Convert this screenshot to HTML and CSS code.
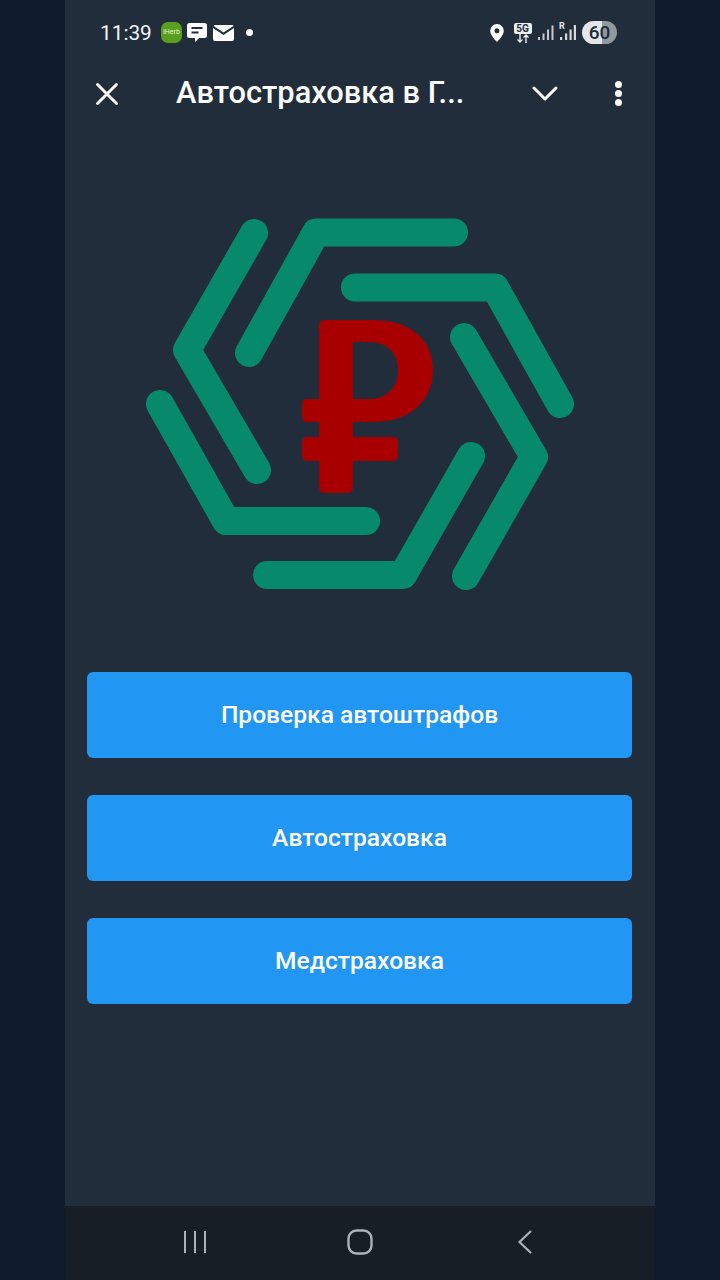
FILE: index.html
```html
<!DOCTYPE html>
<html lang="ru">
<head>
    <meta charset="UTF-8">
    <meta name="viewport" content="width=device-width, initial-scale=1.0">
    <title>Автостраховка</title>
    <link rel="stylesheet" href="styles.css">
</head>
<body>

    <div class="phone">
        <div class="status-bar">
            <div class="status-left">
                <span class="clock">11:39</span>
                <span class="iherb">iHerb</span>
                <svg class="icon-msg" width="20" height="19" viewBox="0 0 20 19">
                    <path d="M2.500 0h15A2.500 2.500 0 0 1 20 2.500v10a2.500 2.500 0 0 1-2.500 2.500H12l-3.500 4-.8-4H2.500A2.500 2.500 0 0 1 0 12.500v-10A2.500 2.500 0 0 1 2.500 0z" fill="#fff"/>
                    <path d="M4.500 5h11M4.500 9.500h7" stroke="#212d3b" stroke-width="2"/>
                </svg>
                <svg class="icon-mail" width="21" height="16" viewBox="0 0 21 16">
                    <path d="M2 0h17q1 0 1.500 1l-10 6.500L.5 1Q1 0 2 0z" fill="#fff"/>
                    <path d="M0 3l10.500 7L21 3v11a2 2 0 0 1-2 2H2a2 2 0 0 1-2-2z" fill="#fff"/>
                </svg>
                <span class="dot"></span>
            </div>
            <div class="status-right">
                <svg class="icon-pin" width="14" height="18" viewBox="0 0 14 18">
                    <path fill-rule="evenodd" d="M7 0a6.800 6.800 0 0 1 6.800 6.800C13.800 11 9 16 7 18 5 16 .2 11 .2 6.800A6.800 6.800 0 0 1 7 0zm0 4.300a2.500 2.500 0 1 0 0 5 2.500 2.500 0 0 0 0-5z" fill="#fff"/>
                </svg>
                <div class="net">
                    <span class="net-label">5G</span>
                    <svg width="14" height="9" viewBox="0 0 14 9">
                        <path d="M4 0v8M1.500 5.500L4 8l2.500-2.500M10 9V1M7.500 3.500L10 1l2.500 2.500" stroke="#fff" stroke-width="1.300" fill="none"/>
                    </svg>
                </div>
                <svg class="icon-signal" width="16" height="17" viewBox="0 0 16 17">
                    <path d="M0 13h2v3H0zM4.500 9.500h2V16h-2zM9 5.500h2V16H9zM13.500 1.500h2V16h-2z" fill="#c4c9cf"/>
                </svg>
                <div class="signal-r">
                    <span class="roam">R</span>
                    <svg width="17" height="17" viewBox="0 0 17 17">
                        <path d="M1 13h2.200v3H1zM6 9.500h2.200V16H6zM10.500 5.500h2.200V16h-2.200zM14.800 1h2.200v15h-2.200z" fill="#d5d8dc"/>
                    </svg>
                </div>
                <span class="battery">60</span>
            </div>
        </div>

        <div class="toolbar">
            <svg class="tb-close" width="24" height="24" viewBox="0 0 24 24">
                <path d="M2.500 2.500l19 19M21.500 2.500l-19 19" stroke="#fff" stroke-width="3" stroke-linecap="round"/>
            </svg>
            <h1 class="tb-title">Автостраховка в Г...</h1>
            <svg class="tb-chevron" width="26" height="17" viewBox="0 0 26 17">
                <path d="M2 3l11 11 11-11" stroke="#fff" stroke-width="3" fill="none" stroke-linecap="round" stroke-linejoin="round"/>
            </svg>
            <div class="tb-more">
                <span></span>
                <span></span>
                <span></span>
            </div>
        </div>

        <div class="content">
            <!-- viewBox is in page coordinates so the logo points are easy to read -->
            <svg class="logo" width="590" height="400" viewBox="65 200 590 400">
                <g fill="none" stroke="#078a6c" stroke-width="28" stroke-linecap="round" stroke-linejoin="round">
                    <path d="M254 233L187 350L257 470"/>
                    <path d="M249 353L316 232.500H454"/>
                    <path d="M355 287.500H495L560 404"/>
                    <path d="M464 337L534 457L466 576"/>
                    <path d="M471 456L403 575H267"/>
                    <path d="M160 404L226 521H366"/>
                </g>
                <path fill="#a80000" fill-rule="evenodd" d="M325 320H372C411 320 433 340 433 370C433 402 409 422 372 422H353V437H393Q398 437 398 442V456Q398 461 393 461H353V487Q353 493 347 493H325Q319 493 319 487V461H307Q302 461 302 456V442Q302 437 307 437H319V422H307Q302 422 302 417V404Q302 399 307 399H319V326Q319 320 325 320ZM353 342V399H369C387 399 398 387 398 370C398 353 387 342 369 342Z"/>
            </svg>

            <div class="buttons">
                <button class="action-btn">Проверка автоштрафов</button>
                <button class="action-btn">Автостраховка</button>
                <button class="action-btn">Медстраховка</button>
            </div>
        </div>

        <div class="nav-bar">
            <svg width="24" height="24" viewBox="0 0 24 24">
                <path d="M2 1v22M12 1v22M22 1v22" stroke="#aab2ba" stroke-width="2"/>
            </svg>
            <svg class="nav-home" width="26" height="26" viewBox="0 0 26 26">
                <rect x="1.500" y="1.500" width="23" height="23" rx="8" fill="none" stroke="#aab2ba" stroke-width="2.400"/>
            </svg>
            <svg width="18" height="26" viewBox="0 0 18 26">
                <path d="M15 2L3.500 13L15 24" stroke="#aab2ba" stroke-width="2.200" fill="none"/>
            </svg>
        </div>
    </div>

</body>
</html>
```

FILE: styles.css
```css
* {
    box-sizing: border-box;
}

html, body {
    height: 100%;
}

body {
    margin: 0;
    padding: 0;
    background-color: #0e1c2b;
    font-family: Roboto, "Noto Sans", sans-serif;
    color: #fff;
    overflow: hidden;
}

.phone {
    width: 590px;
    height: 1280px;
    margin: 0 auto;
    background-color: #212d3b;
    display: flex;
    flex-direction: column;
}

/* status bar */
.status-bar {
    height: 64px;
    padding: 21px 38px 0 35px;
    display: flex;
    justify-content: space-between;
    align-items: flex-start;
}

.status-left,
.status-right {
    display: flex;
    align-items: center;
    height: 23px;
}

.clock {
    font-size: 20.800px;
    width: 61px;
    color: #f4f5f6;
}

.iherb {
    width: 21px;
    height: 21px;
    border-radius: 7px;
    background-color: #5a9e1e;
    font-size: 7px;
    line-height: 21px;
    text-align: center;
    color: #e8f3dc;
}

.icon-msg {
    margin-left: 5px;
}

.icon-mail {
    margin-left: 6px;
}

.dot {
    width: 7px;
    height: 7px;
    border-radius: 50%;
    background-color: #fff;
    margin-left: 12px;
}

.icon-pin {
    margin-right: 9px;
}

.net {
    width: 19px;
    margin-right: 6px;
    display: flex;
    flex-direction: column;
    align-items: center;
}

.net-label {
    width: 18px;
    height: 11px;
    border-radius: 2px;
    background-color: #eef0f2;
    color: #212d3b;
    font-size: 10px;
    font-weight: 700;
    line-height: 11px;
    text-align: center;
}

.icon-signal {
    margin-right: 5px;
}

.signal-r {
    position: relative;
    margin-right: 6px;
    display: flex;
}

.roam {
    position: absolute;
    left: 0;
    top: -3px;
    font-size: 9px;
    font-weight: 700;
    color: #e4e6e9;
}

.battery {
    width: 35px;
    height: 23px;
    border-radius: 12px;
    background: linear-gradient(90deg, #e3e6ea 0, #e3e6ea 56%, #92989f 56%, #92989f 100%);
    color: #212d3b;
    font-size: 19px;
    font-weight: 500;
    line-height: 23px;
    text-align: center;
}

/* toolbar */
.toolbar {
    height: 60px;
    display: flex;
    align-items: center;
    padding: 0 0 1px 30px;
}

.tb-close {
    flex-shrink: 0;
}

.tb-title {
    margin: 0 0 3px 57px;
    width: 356px;
    font-size: 30.800px;
    font-weight: 500;
    white-space: nowrap;
}

.tb-chevron {
    flex-shrink: 0;
}

.tb-more {
    margin-left: 57px;
    display: flex;
    flex-direction: column;
    gap: 2px;
}

.tb-more span {
    width: 7px;
    height: 7px;
    border-radius: 50%;
    background-color: #fff;
}

/* main area */
.content {
    flex: 1;
    padding-top: 76px;
}

.logo {
    display: block;
}

.buttons {
    margin-top: 72px;
    padding: 0 23px 0 22px;
    display: flex;
    flex-direction: column;
    gap: 37px;
}

.action-btn {
    height: 86px;
    padding: 0 0 2px;
    border: none;
    border-radius: 6px;
    background-color: #2196f3;
    color: #fff;
    font-family: Roboto, "Noto Sans", sans-serif;
    font-size: 24.600px;
    font-weight: 500;
}

/* android nav */
.nav-bar {
    height: 74px;
    background-color: #171e26;
    display: flex;
    align-items: center;
    padding: 0 121px 2px 118px;
    justify-content: space-between;
}

.nav-home {
    margin-right: 4px;
}
```
